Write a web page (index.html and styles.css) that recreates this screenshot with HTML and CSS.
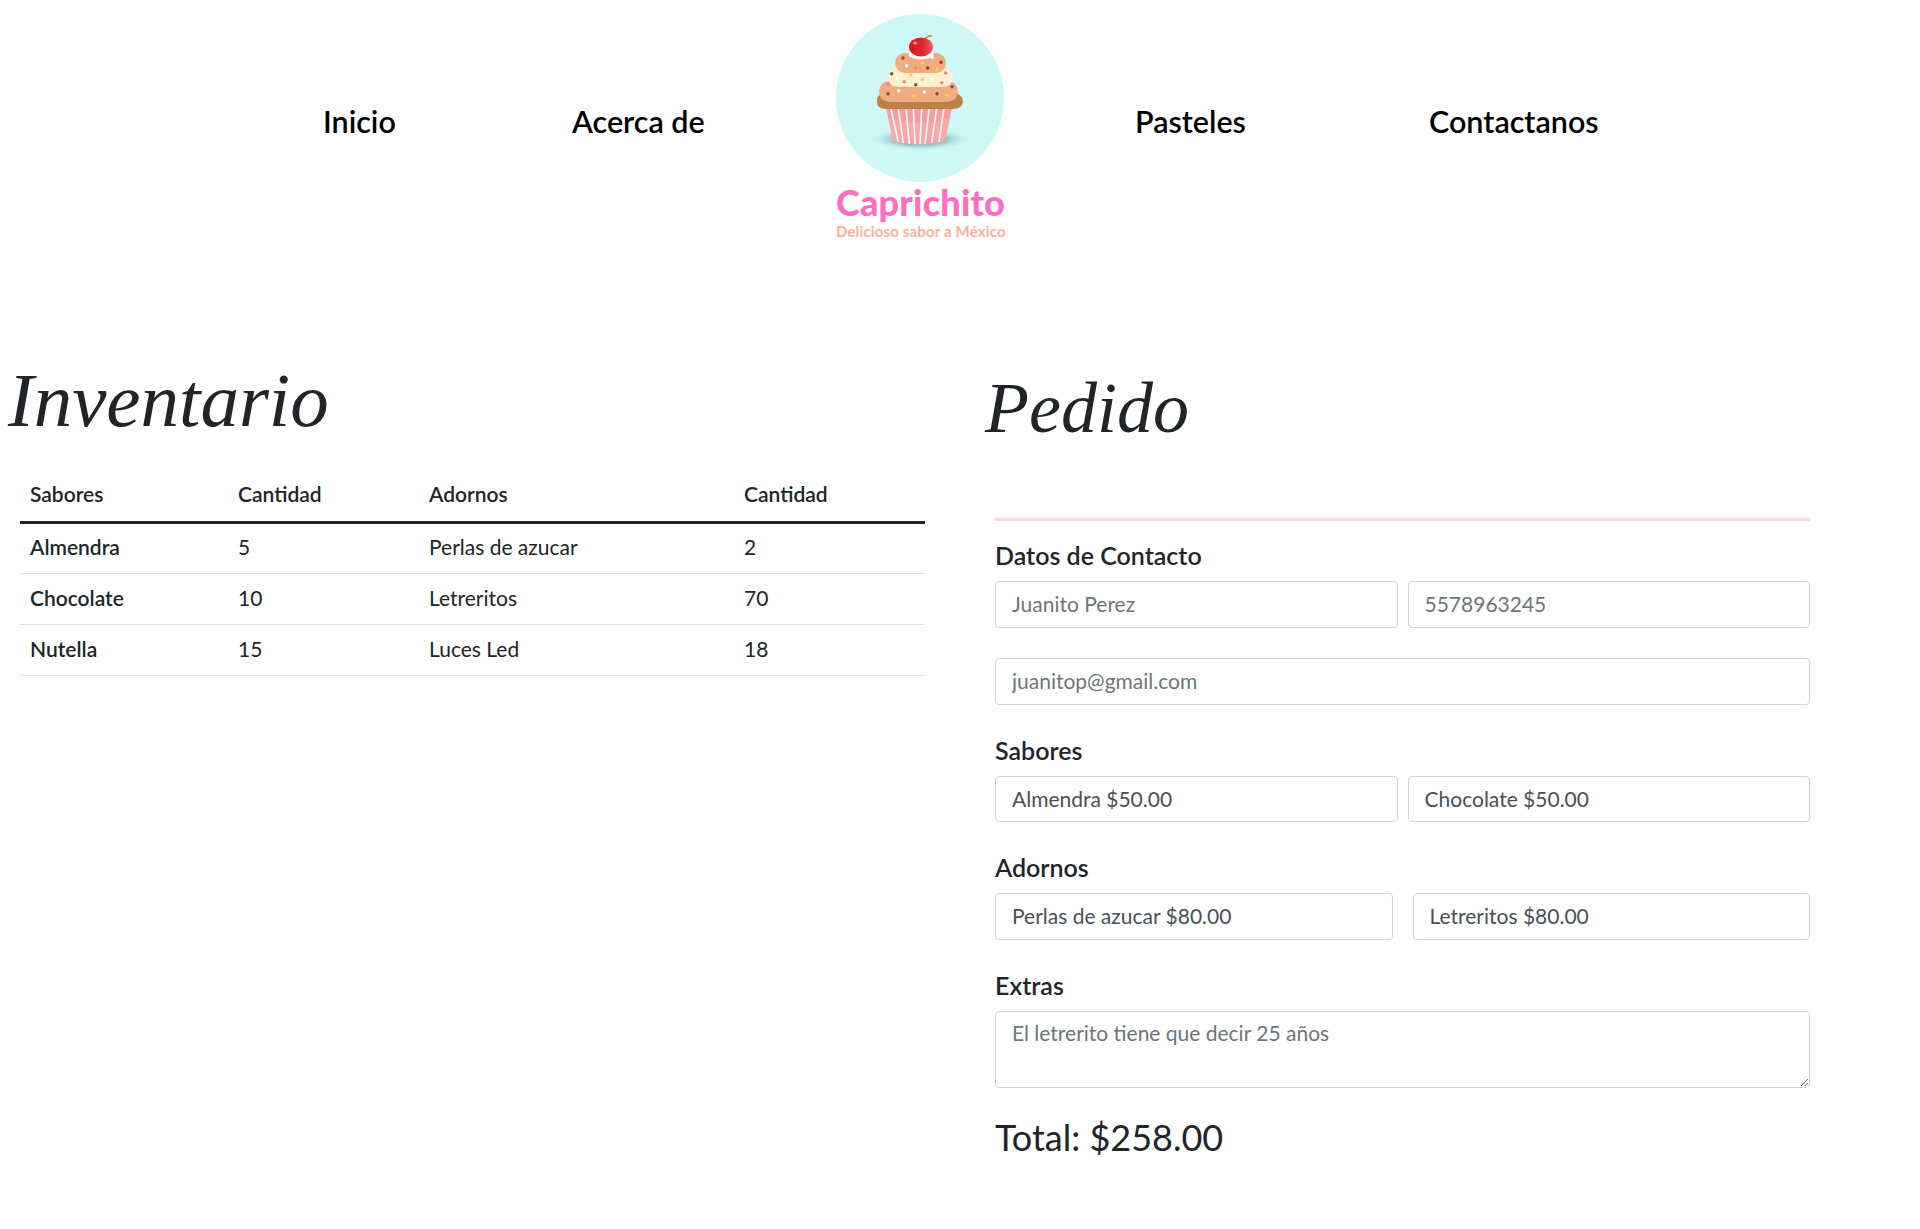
FILE: index.html
```html
<!DOCTYPE html>
<html lang="es">
  <head>
    <meta charset="UTF-8" />
    <meta name="viewport" content="width=device-width, initial-scale=1.0" />
    <title>Capricho - Inventario</title>
    <link rel="stylesheet" href="styles.css">
  </head>
  <body>
    <header class="top-nav">
      <a class="nav-link link-inicio" href="#">Inicio</a>
      <a class="nav-link link-acerca" href="#">Acerca de</a>
      <div class="brand">
        <svg class="brand-logo" viewBox="0 0 168 168" width="168" height="168" aria-hidden="true">
          <defs>
            <radialGradient id="shadow">
              <stop offset="0" stop-color="#6f9e9e" />
              <stop offset="0.55" stop-color="#8dbcbc" stop-opacity="0.8" />
              <stop offset="1" stop-color="#cef7f5" stop-opacity="0" />
            </radialGradient>
            <linearGradient id="cherry" x1="0" x2="1" y1="0" y2="0">
              <stop offset="0" stop-color="#d4141d" />
              <stop offset="0.6" stop-color="#dc2a30" />
              <stop offset="1" stop-color="#ea5f63" />
            </linearGradient>
          </defs>
          <circle cx="84" cy="84" r="84" fill="#cef7f5" />
          <ellipse cx="84" cy="125" rx="50" ry="12" fill="url(#shadow)" />
          <path d="M50 94H116L109 127Q84 133 57 127Z" fill="#f9a8aa" />
          <path d="M50 94H116L113 104Q84 114 53 104Z" fill="#e88f92" opacity="0.35" />
          <path d="M54.700 94L62.300 128M62.300 94L67.300 129M70 94L73.300 130M77.300 94L79 130M85.700 94L84 130M93.300 94L89 130M100.700 94L95.700 129M108 94L103 128" stroke="#fff" stroke-width="1.5" fill="none" />
          <path d="M48 78H119Q127 82 127 88Q126 95 117 95H50Q41 95 41 88Q40 82 48 78Z" fill="#bd8145" />
          <rect x="43" y="67" width="79" height="21" rx="10.5" fill="#f0ab80" />
          <rect x="52" y="54" width="65" height="19" rx="9.5" fill="#fdf0cf" />
          <rect x="59" y="39" width="51" height="20" rx="10" fill="#f0ab80" />
          <ellipse cx="85" cy="40.500" rx="12.500" ry="5" fill="#fff" />
          <path d="M89 26Q89.500 22 95.700 21.700" stroke="#c47a3c" stroke-width="1.400" fill="none" />
          <ellipse cx="85" cy="33" rx="12" ry="9.500" fill="url(#cherry)" />
          <ellipse cx="79" cy="29" rx="2" ry="1.500" fill="#f58a8d" />
          <g fill="#7f5228">
            <circle cx="67" cy="44" r="1.700" /><circle cx="105" cy="48.300" r="1.700" /><circle cx="91.700" cy="54" r="1.700" />
            <circle cx="55.700" cy="59.700" r="1.700" /><circle cx="79.700" cy="70.700" r="1.700" /><circle cx="116" cy="72.700" r="1.700" />
            <circle cx="52" cy="79.700" r="1.700" /><circle cx="101" cy="79.700" r="1.700" />
          </g>
          <g fill="#fff">
            <circle cx="70.700" cy="51.700" r="1.700" /><circle cx="96.300" cy="43.300" r="1.700" /><circle cx="60.300" cy="64.700" r="1.700" />
            <circle cx="96" cy="65.300" r="1.700" /><circle cx="62.700" cy="76.700" r="1.700" /><circle cx="88.300" cy="78" r="1.700" />
          </g>
          <g fill="#fbcf4a">
            <circle cx="86.300" cy="49.300" r="1.700" /><circle cx="101" cy="55.300" r="1.700" /><circle cx="75" cy="61" r="1.700" />
            <circle cx="86.300" cy="65.300" r="1.700" /><circle cx="77.700" cy="82" r="1.700" /><circle cx="111" cy="81.300" r="1.700" />
          </g>
          <g fill="#f57f83">
            <circle cx="79.700" cy="54" r="1.700" /><circle cx="109.700" cy="59" r="1.700" /><circle cx="68.300" cy="67.700" r="1.700" />
            <circle cx="105.700" cy="68.700" r="1.700" /><circle cx="52.300" cy="70.300" r="1.700" />
          </g>
        </svg>
        <div class="brand-name">Caprichito</div>
        <div class="brand-tag">Delicioso sabor a México</div>
      </div>
      <a class="nav-link link-pasteles" href="#">Pasteles</a>
      <a class="nav-link" href="#">Contactanos</a>
    </header>

    <main class="content">
      <section class="col-inventario">
        <h1 class="script-title">Inventario</h1>
        <table class="stock-table">
          <thead>
            <tr>
              <th class="c1">Sabores</th>
              <th class="c2">Cantidad</th>
              <th class="c3">Adornos</th>
              <th>Cantidad</th>
            </tr>
          </thead>
          <tbody>
            <tr><th>Almendra</th><td>5</td><td>Perlas de azucar</td><td>2</td></tr>
            <tr><th>Chocolate</th><td>10</td><td>Letreritos</td><td>70</td></tr>
            <tr><th>Nutella</th><td>15</td><td>Luces Led</td><td>18</td></tr>
          </tbody>
        </table>
      </section>

      <section class="col-pedido">
        <h1 class="script-title pedido-title">Pedido</h1>
        <form class="order-form">
          <h2 class="form-heading first">Datos de Contacto</h2>
          <div class="field-row">
            <input type="text" placeholder="Juanito Perez" />
            <input type="text" placeholder="5578963245" />
          </div>
          <input class="field-email" type="text" placeholder="juanitop@gmail.com" />

          <h2 class="form-heading">Sabores</h2>
          <div class="field-row short-row">
            <input type="text" value="Almendra $50.00" />
            <input type="text" value="Chocolate $50.00" />
          </div>

          <h2 class="form-heading">Adornos</h2>
          <div class="field-row wide-gap">
            <input type="text" value="Perlas de azucar $80.00" />
            <input type="text" value="Letreritos $80.00" />
          </div>

          <h2 class="form-heading">Extras</h2>
          <textarea placeholder="El letrerito tiene que decir 25 años"></textarea>

          <div class="total">Total: $258.00</div>
        </form>
      </section>
    </main>
  </body>
</html>
```

FILE: styles.css
```css
* {
  box-sizing: border-box;
}

html, body {
  height: 100%;
}

body {
  margin: 0;
  background: #fff;
  color: #212529;
  font-family: "Lato", "Noto Sans", sans-serif;
  font-size: 21px;
  overflow: hidden;
}

.top-nav {
  display: flex;
  align-items: flex-start;
  height: 350px;
  padding: 14px 0 0 323px;
}

.nav-link {
  margin-top: 87px;
  color: #000;
  font-size: 30.5px;
  font-weight: 600;
  line-height: 40px;
  text-decoration: none;
}

.link-inicio {
  width: 249px;
}

.link-acerca {
  width: 264px;
}

.link-pasteles {
  width: 294px;
}

.brand {
  width: 168px;
  margin-right: 131px;
  text-align: center;
}

.brand-logo {
  display: block;
}

.brand-name {
  color: #ff6ec0;
  font-size: 36px;
  font-weight: 900;
  letter-spacing: 0.2px;
  line-height: 40px;
}

.brand-tag {
  color: #fcb09a;
  font-size: 15px;
  font-weight: 700;
  letter-spacing: 0.15px;
  line-height: 18px;
  white-space: nowrap;
}

.content {
  display: flex;
}

.col-inventario {
  width: 985px;
  padding-left: 20px;
}

.col-pedido {
  width: 825px;
}

.script-title {
  height: 116px;
  margin: 0;
  color: #212529;
  font-family: "Liberation Serif", serif;
  font-size: 77px;
  font-style: italic;
  font-weight: 400;
  line-height: 100px;
}

.col-inventario .script-title {
  margin-left: -12px;
}

.pedido-title {
  height: 168px;
  padding-top: 8px;
  font-size: 72px;
}

.stock-table {
  width: 905px;
  border-collapse: collapse;
  table-layout: fixed;
}

.stock-table th,
.stock-table td {
  height: 51px;
  padding: 0 10px 3px;
  border-bottom: 1px solid #dee2e6;
  text-align: left;
  font-weight: 400;
}

.stock-table th {
  font-weight: 600;
}

.stock-table thead th {
  height: 56px;
  padding-bottom: 0;
  border-bottom: 3px solid #212529;
}

.stock-table .c1 {
  width: 208px;
}

.stock-table .c2 {
  width: 191px;
}

.stock-table .c3 {
  width: 315px;
}

.order-form {
  width: 815px;
  margin-left: 10px;
  border-top: 3px solid #f7d9e5;
}

.form-heading {
  height: 71px;
  margin: 0;
  padding-top: 30px;
  color: #212529;
  font-size: 25px;
  font-weight: 600;
  line-height: 30px;
}

.form-heading.first {
  height: 60px;
  padding-top: 19px;
}

.field-row {
  display: flex;
  gap: 10px;
}

.field-row.wide-gap {
  gap: 20px;
}

input,
textarea {
  display: block;
  width: 100%;
  min-width: 0;
  height: 47px;
  padding: 0 16px 2px;
  border: 1px solid #ced4da;
  border-radius: 4px;
  background: #fff;
  color: #495057;
  font-family: inherit;
  font-size: 21px;
}

.short-row input {
  height: 46px;
}

::placeholder {
  color: #6c757d;
  opacity: 1;
}

.field-email {
  margin-top: 30px;
}

textarea {
  height: 77px;
  padding-top: 6px;
  resize: vertical;
  line-height: 30px;
}

.total {
  margin-top: 27px;
  font-size: 36px;
  line-height: 44px;
}
```
